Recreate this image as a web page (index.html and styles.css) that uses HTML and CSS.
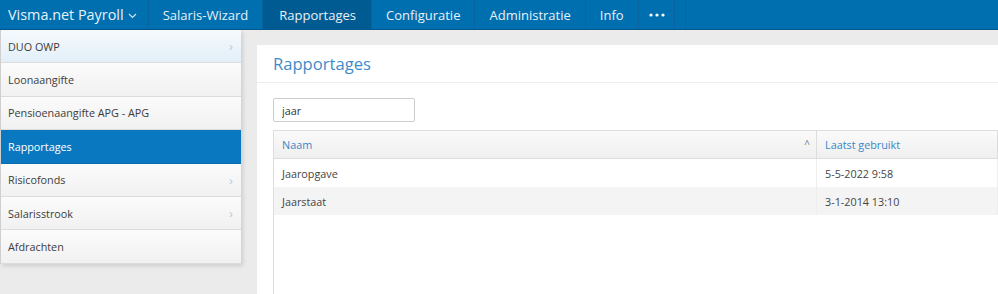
FILE: index.html
```html
<!DOCTYPE html>
<html lang="nl">

<head>
    <meta charset="UTF-8">
    <meta name="viewport" content="width=device-width, initial-scale=1.0">
    <title>Rapportages - Visma.net Payroll</title>
    <link rel="stylesheet" href="styles.css">
</head>

<body>

    <!-- Topnavigatie -->
    <div class="topnav">
        <a class="brand" href="#">Visma.net Payroll
            <svg class="caret" width="9" height="6" viewBox="0 0 9 6"><polyline points="1,1 4.5,4.5 8,1" fill="none" stroke="#cfe3f2" stroke-width="1.2"/></svg>
        </a>
        <a href="#">Salaris-Wizard</a>
        <a class="active" href="#">Rapportages</a>
        <a href="#">Configuratie</a>
        <a href="#">Administratie</a>
        <a href="#">Info</a>
        <a class="more" href="#">
            <svg width="16" height="4" viewBox="0 0 16 4"><circle cx="2" cy="2" r="1.6" fill="#fff"/><circle cx="8" cy="2" r="1.6" fill="#fff"/><circle cx="14" cy="2" r="1.6" fill="#fff"/></svg>
        </a>
        <span class="spacer"></span>
    </div>

    <div class="page">
        <!-- Sidebar -->
        <div class="sidebar">
            <a class="hover" href="#">DUO OWP <span class="chev">›</span></a>
            <a href="#">Loonaangifte</a>
            <a href="#">Pensioenaangifte APG - APG</a>
            <a class="active" href="#">Rapportages</a>
            <a href="#">Risicofonds <span class="chev">›</span></a>
            <a href="#">Salarisstrook <span class="chev">›</span></a>
            <a href="#">Afdrachten</a>
        </div>

        <!-- Inhoud -->
        <div class="main">
            <div class="card">
                <div class="card-title">Rapportages</div>
                <div class="card-body">
                    <input class="search" type="text" value="jaar">
                    <div class="grid">
                        <table>
                            <thead>
                                <tr>
                                    <th class="col-naam">Naam <span class="sort">^</span></th>
                                    <th>Laatst gebruikt</th>
                                </tr>
                            </thead>
                            <tbody>
                                <tr>
                                    <td>Jaaropgave</td>
                                    <td>5-5-2022 9:58</td>
                                </tr>
                                <tr class="alt">
                                    <td>Jaarstaat</td>
                                    <td>3-1-2014 13:10</td>
                                </tr>
                            </tbody>
                        </table>
                    </div>
                </div>
            </div>
        </div>
    </div>

</body>

</html>
```

FILE: styles.css
```css
body {
    margin: 0;
    font-family: 'Open Sans', sans-serif;
    background: #ebebeb;
    height: 294px;
    overflow: hidden;
}

/* Topnavigatie */
.topnav {
    display: flex;
    height: 29px;
    background: #006fb0;
    border-bottom: 1px solid #00578c;
}

.topnav a {
    display: flex;
    align-items: center;
    padding: 0 14px;
    color: #e8f1f8;
    text-decoration: none;
    font-size: 13px;
    border-right: 1px solid #0a63a0;
}

.topnav a.brand {
    padding: 0 11px 0 8px;
    font-size: 14.4px;
    gap: 4px;
}

.topnav a.active {
    background: #005b93;
    padding: 0 15px 0 16px;
}

.topnav a.more {
    width: 16px;
    padding: 0 9px 0 10px;
}

.topnav .spacer {
    width: 10px;
    border-right: 1px solid #0a63a0;
}

.caret {
    margin-top: 2px;
}

/* Layout */
.page {
    display: flex;
}

.sidebar {
    width: 240px;
    flex-shrink: 0;
    border-left: 1px solid #cfcfcf;
    box-shadow: 2px 2px 4px rgba(0, 0, 0, 0.12);
    align-self: flex-start;
}

.sidebar a {
    display: flex;
    align-items: center;
    justify-content: space-between;
    height: 32.4px;
    padding: 0 8px 0 7px;
    color: #3c3c3c;
    font-size: 10.8px;
    text-decoration: none;
    background: linear-gradient(#fbfbfb, #f1f1f1);
    border-bottom: 1px solid #dcdcdc;
}

.sidebar a.hover {
    background: linear-gradient(#f6fafd, #e3eff8);
}

.sidebar a.active {
    background: #0a78c0;
    color: #fff;
    border-bottom-color: #0a6aaa;
}

.chev {
    color: #b5cbe0;
    font-size: 13px;
}

.main {
    flex: 1;
    padding: 15px 0 0 16px;
    min-width: 0;
}

.card {
    background: white;
    height: 249px;
}

.card-title {
    height: 37px;
    padding: 0 16px;
    display: flex;
    align-items: center;
    font-size: 16.6px;
    color: #3e8cc9;
    border-bottom: 1px solid #ececec;
}

.card-body {
    padding: 15px 0 0 16px;
}

.search {
    display: block;
    box-sizing: border-box;
    width: 142px;
    height: 24px;
    padding: 0 8px;
    border: 1px solid #cccccc;
    border-radius: 2px;
    font-family: 'Open Sans', sans-serif;
    font-size: 10.8px;
    color: #333;
}

.grid {
    margin-top: 8px;
    height: 164px;
    border-left: 1px solid #dddddd;
    border-top: 1px solid #dddddd;
}

table {
    width: 100%;
    border-collapse: collapse;
    font-size: 10.8px;
}

th {
    height: 27px;
    padding: 0 8px;
    text-align: left;
    font-weight: normal;
    color: #3a86c6;
    background: linear-gradient(#fafafa, #efefef);
    border-bottom: 1px solid #dddddd;
    border-right: 1px solid #dddddd;
}

th.col-naam {
    width: 526px;
    position: relative;
}

.sort {
    position: absolute;
    right: 6px;
    top: 6px;
    color: #777;
    font-size: 10px;
}

td {
    height: 28px;
    padding: 0 8px;
    color: #444;
    border-right: 1px solid #eeeeee;
}

tr.alt td {
    background: #f4f4f4;
}
```
